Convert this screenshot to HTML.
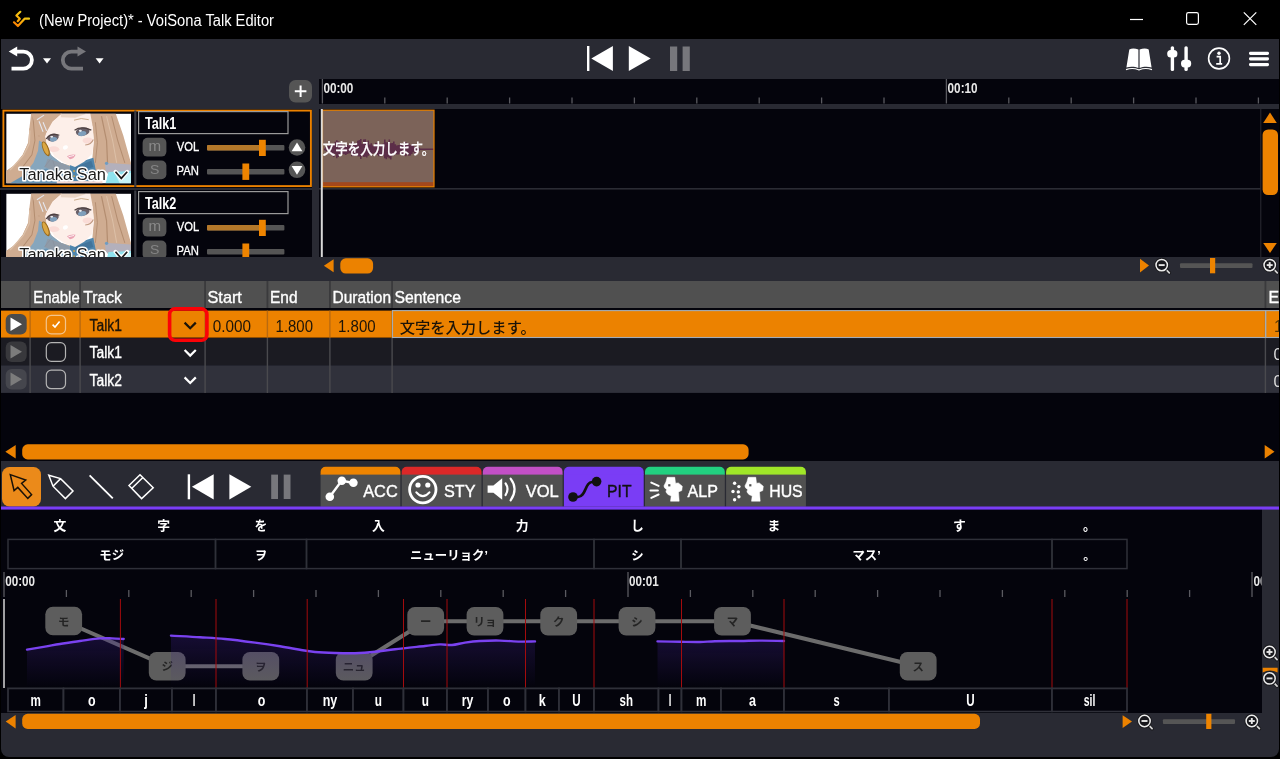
<!DOCTYPE html>
<html lang="ja"><head><meta charset="utf-8"><title>(New Project)* - VoiSona Talk Editor</title>
<style>
html,body{margin:0;padding:0;background:#000;}
body{width:1280px;height:759px;overflow:hidden;font-family:"Liberation Sans","Noto Sans CJK JP",sans-serif;}
#app{position:relative;width:1280px;height:759px;background:#000;overflow:hidden;}
#app>div{position:absolute;}
#win{left:1px;top:39px;width:1278px;height:718px;background:#292a33;border-radius:0 0 8px 8px;}
.dark{background:#04040c;}
svg{position:absolute;left:0;top:0;will-change:transform;}
svg text{font-family:"Liberation Sans","Noto Sans CJK JP",sans-serif;white-space:pre;}
</style></head><body>
<div id="app">
<div id="win"></div>
<div class="dark" id="ruler1" style="left:319px;top:78.5px;width:960px;height:25px"></div>
<div class="dark" id="trackhead" style="left:1px;top:109px;width:311px;height:148px"></div>
<div class="dark" id="tracklane" style="left:319px;top:109px;width:960px;height:148px"></div>
<div class="dark" id="tablearea" style="left:1px;top:308px;width:1278px;height:153px"></div>
<div class="dark" id="editor" style="left:1px;top:509px;width:1260.5px;height:203.5px"></div>
<svg width="1280" height="759" viewBox="0 0 1280 759">
<g id="titlebar">
<defs><linearGradient id="ig" gradientUnits="userSpaceOnUse" x1="26" y1="12" x2="15" y2="26"><stop offset="0" stop-color="#ecd81e"/><stop offset=".45" stop-color="#f7b80e"/><stop offset="1" stop-color="#ff7e00"/></linearGradient></defs>
<path d="M20.3 11.8 L16.4 15.5 L19.8 18.8 L17.7 21.2" fill="none" stroke="url(#ig)" stroke-width="2.2" stroke-linejoin="round" stroke-linecap="round"/>
<path d="M14 22.3 L17.9 26 L24.6 18.7 L29 18.7" fill="none" stroke="url(#ig)" stroke-width="2.2" stroke-linejoin="round" stroke-linecap="round"/>
<text x="39" y="25.7" font-size="16" fill="#fff" font-weight="400" text-anchor="start" textLength="235" lengthAdjust="spacingAndGlyphs" >(New Project)* - VoiSona Talk Editor</text>
<line x1="1130" y1="19.5" x2="1143" y2="19.5" stroke="#fff" stroke-width="1.2" />
<rect x="1186.6" y="12.6" width="11.8" height="11.8" rx="1.8" fill="none" stroke="#fff" stroke-width="1.2"/>
<path d="M1243.8 12.3 L1256.3 24.8 M1256.3 12.3 L1243.8 24.8" stroke="#fff" stroke-width="1.2" fill="none"/>
</g>
<g id="toolbar">
<path d="M16 51.6 H23.4 A8.4 8.4 0 0 1 23.4 68.6 H11.5" fill="none" stroke="#fff" stroke-width="3.8"/>
<polygon points="8.7,51.6 17.2,46.6 17.2,56.6" fill="#fff" />
<polygon points="43,58.3 51,58.3 47,63.6" fill="#fff" />
<path d="M78.5 51.6 H71.3 A8.4 8.4 0 0 0 71.3 68.6 H83" fill="none" stroke="#77777c" stroke-width="3.8"/>
<polygon points="86,51.6 77.5,46.6 77.5,56.6" fill="#77777c" />
<polygon points="95.6,58.3 103.6,58.3 99.6,63.6" fill="#fff" />
<rect x="587" y="46" width="2.4" height="25" fill="#fff"/>
<polygon points="591.3,58.5 612.9,46 612.9,71" fill="#fff" />
<polygon points="628.8,46 650.7,58.5 628.8,71" fill="#fff" />
<rect x="670" y="46.5" width="7.2" height="24.5" fill="#77777c"/>
<rect x="682.6" y="46.5" width="7.2" height="24.5" fill="#77777c"/>
<path d="M1138.4 49.6 C1135 48.2 1131.5 48.4 1129.3 49.4 L1126.4 67.6 C1130 66.4 1135 66.6 1138.4 68 Z" fill="#fff"/>
<path d="M1139.6 49.6 C1143 48.2 1146.5 48.4 1148.7 49.4 L1151.6 67.6 C1148 66.4 1143 66.6 1139.6 68 Z" fill="#fff"/>
<path d="M1126 69.6 C1130 68.2 1135 68.3 1138.6 69.8 L1139.4 69.8 C1143 68.3 1148 68.2 1152 69.6" fill="none" stroke="#fff" stroke-width="1.2"/>
<rect x="1170.7" y="46.2" width="3.4" height="24.8" fill="#fff" rx="1.6"/>
<rect x="1184.4" y="46.2" width="3.4" height="24.8" fill="#fff" rx="1.6"/>
<rect x="1167.2" y="50" width="10.2" height="7.6" fill="#fff" rx="3.6"/>
<rect x="1181" y="59.8" width="10.2" height="7.6" fill="#fff" rx="3.6"/>
<circle cx="1219" cy="58.5" r="10.4" fill="none" stroke="#fff" stroke-width="1.6"/>
<circle cx="1219" cy="53.3" r="1.7" fill="#fff"/>
<path d="M1216.6 56.6 H1220.2 V63.6 M1216.2 63.8 H1222.2" fill="none" stroke="#fff" stroke-width="1.7"/>
<rect x="1249" y="51.8" width="20" height="3.2" fill="#fff" rx="1.4"/>
<rect x="1249" y="57.3" width="20" height="3.2" fill="#fff" rx="1.4"/>
<rect x="1249" y="63.0" width="20" height="3.2" fill="#fff" rx="1.4"/>
</g>
<g id="ruler1g">
<line x1="322.4" y1="79" x2="322.4" y2="103.5" stroke="#5a5a60" stroke-width="1.3" />
<line x1="384.79999999999995" y1="97.5" x2="384.79999999999995" y2="103.5" stroke="#5a5a60" stroke-width="1.3" />
<line x1="447.2" y1="97.5" x2="447.2" y2="103.5" stroke="#5a5a60" stroke-width="1.3" />
<line x1="509.59999999999997" y1="97.5" x2="509.59999999999997" y2="103.5" stroke="#5a5a60" stroke-width="1.3" />
<line x1="572.0" y1="97.5" x2="572.0" y2="103.5" stroke="#5a5a60" stroke-width="1.3" />
<line x1="634.4" y1="97.5" x2="634.4" y2="103.5" stroke="#5a5a60" stroke-width="1.3" />
<line x1="696.8" y1="97.5" x2="696.8" y2="103.5" stroke="#5a5a60" stroke-width="1.3" />
<line x1="759.2" y1="97.5" x2="759.2" y2="103.5" stroke="#5a5a60" stroke-width="1.3" />
<line x1="821.5999999999999" y1="97.5" x2="821.5999999999999" y2="103.5" stroke="#5a5a60" stroke-width="1.3" />
<line x1="884.0" y1="97.5" x2="884.0" y2="103.5" stroke="#5a5a60" stroke-width="1.3" />
<line x1="946.4" y1="79" x2="946.4" y2="103.5" stroke="#5a5a60" stroke-width="1.3" />
<line x1="1008.8" y1="97.5" x2="1008.8" y2="103.5" stroke="#5a5a60" stroke-width="1.3" />
<line x1="1071.1999999999998" y1="97.5" x2="1071.1999999999998" y2="103.5" stroke="#5a5a60" stroke-width="1.3" />
<line x1="1133.6" y1="97.5" x2="1133.6" y2="103.5" stroke="#5a5a60" stroke-width="1.3" />
<line x1="1196.0" y1="97.5" x2="1196.0" y2="103.5" stroke="#5a5a60" stroke-width="1.3" />
<line x1="1258.4" y1="97.5" x2="1258.4" y2="103.5" stroke="#5a5a60" stroke-width="1.3" />
<text x="323.4" y="92.8" font-size="15" fill="#e8e8e8" font-weight="700" text-anchor="start" textLength="30" lengthAdjust="spacingAndGlyphs" >00:00</text>
<text x="947.6" y="92.8" font-size="15" fill="#e8e8e8" font-weight="700" text-anchor="start" textLength="30" lengthAdjust="spacingAndGlyphs" >00:10</text>
<rect x="289" y="80" width="23" height="22.5" fill="#555" rx="6.5"/>
<path d="M294.8 91.2 H306.4 M300.6 85.4 V97" stroke="#fff" stroke-width="2" fill="none"/>
</g>
<clipPath id="trk"><rect x="0" y="109" width="1280" height="148"/></clipPath>
<g id="tracks" clip-path="url(#trk)">
<rect x="3.4" y="110.6" width="307.5" height="75.5" fill="none" stroke="#ec8200" stroke-width="1.9"/>
<g transform="translate(6.2,113.6) scale(0.10156) translate(-22,-35)" clip-path="url(#pc1)">
<clipPath id="pc1"><rect x="22" y="35" width="1229" height="688"/></clipPath>
<rect x="22" y="35" width="1229" height="688" fill="#fff"/>
<path d="M268 35 L570 35 L470 120 L410 260 L420 340 L470 450 L560 520 L700 560 L700 722 L22 722 L22 600 L100 545 L185 440 L240 320 L250 180 Z" fill="#cfac91"/>
<path d="M345 300 L395 330 L470 450 L560 520 L660 555 L700 722 L120 722 L200 640 L290 520 L335 400 Z" fill="#86a6bd"/>
<path d="M60 722 L200 640 L420 575 L640 600 L700 722 Z" fill="#6a94b3"/>
<path d="M430 480 L560 520 L650 560 L640 610 L470 590 L400 560 Z" fill="#8f9ba8"/>
<path d="M22 600 L100 545 L185 440 L240 320 L250 180 L305 200 L330 330 L310 440 L230 560 L110 650 L22 690 Z" fill="#cfac91"/>
<path d="M285 60 L305 300 L275 440 L170 580" fill="none" stroke="#b38d70" stroke-width="10"/>
<path d="M330 60 L345 260" fill="none" stroke="#b38d70" stroke-width="8"/>
<path d="M255 200 L250 330 L190 450 L60 590" fill="none" stroke="#dcc0a8" stroke-width="12"/>
<path d="M800 35 L1100 35 L1175 250 L1250 520 L1250 600 L900 600 L870 480 L885 300 L870 160 Z" fill="#cfac91"/>
<path d="M960 60 L1010 300 L1020 520" fill="none" stroke="#b38d70" stroke-width="12"/>
<path d="M1060 60 L1120 300 L1190 520" fill="none" stroke="#b38d70" stroke-width="10"/>
<path d="M900 120 L920 320 L900 520" fill="none" stroke="#b38d70" stroke-width="9"/>
<path d="M1010 60 L1070 300 L1110 520" fill="none" stroke="#dcc0a8" stroke-width="10"/>
<path d="M650 540 L880 470 L905 600 L905 722 L650 722 Z" fill="#4f86ad"/>
<path d="M700 560 L860 500 L880 560 L720 610 Z" fill="#41749b"/>
<circle cx="690" cy="600" r="9" fill="#d9a64a"/><circle cx="690" cy="650" r="9" fill="#d9a64a"/>
<path d="M560 35 L850 35 L875 170 L885 300 L870 430 L790 510 L700 560 L600 525 L500 460 L440 370 L405 260 L440 150 Z" fill="#fdefe9"/>
<path d="M268 35 L570 35 L480 110 L430 200 L400 250 L330 250 L300 120 Z" fill="#cfac91"/>
<path d="M560 35 L820 35 L700 75 L560 70 Z" fill="#dcc0a8" opacity=".55"/>
<path d="M690 100 Q760 70 835 95" fill="none" stroke="#c8a782" stroke-width="9"/>
<path d="M325 95 L395 50 M345 110 L385 215 M385 120 L420 205" fill="none" stroke="#e4e6ee" stroke-width="11"/>
<ellipse cx="490" cy="385" rx="55" ry="28" fill="#f7c9c6" opacity=".5"/>
<ellipse cx="825" cy="300" rx="50" ry="30" fill="#f7c9c6" opacity=".5"/>
<path d="M800 345 Q860 340 880 290" fill="none" stroke="#c09a82" stroke-width="10"/>
<ellipse cx="482" cy="270" rx="58" ry="38" fill="#6a6068" transform="rotate(-12 482 270)"/>
<ellipse cx="488" cy="288" rx="36" ry="22" fill="#7f9fbb" transform="rotate(-12 488 288)"/>
<ellipse cx="470" cy="262" rx="14" ry="10" fill="#e8edf2"/>
<path d="M415 285 Q460 220 545 248" fill="none" stroke="#4e4040" stroke-width="11"/>
<ellipse cx="775" cy="212" rx="68" ry="42" fill="#6a6068" transform="rotate(-10 775 212)"/>
<ellipse cx="770" cy="232" rx="42" ry="24" fill="#7f9fbb" transform="rotate(-10 770 232)"/>
<ellipse cx="752" cy="205" rx="15" ry="10" fill="#e8edf2"/>
<path d="M695 198 Q760 155 860 198" fill="none" stroke="#4e4040" stroke-width="12"/>
<ellipse cx="605" cy="368" rx="26" ry="20" fill="#fff" transform="rotate(-25 605 368)"/>
<path d="M620 455 Q660 430 705 440 Q690 480 650 485 Z" fill="#eaa3b4"/>
<path d="M635 460 L690 447" stroke="#fff" stroke-width="8"/>
<ellipse cx="412" cy="382" rx="30" ry="78" fill="#9a6b1f" transform="rotate(-22 412 382)"/>
<ellipse cx="410" cy="380" rx="20" ry="66" fill="#dba844" transform="rotate(-22 410 380)"/>
<path d="M470 470 L400 560 M480 490 L500 560" stroke="#8a8f9c" stroke-width="6" fill="none"/>
<path d="M995 520 L1250 535 L1250 610 L1060 615 L1040 650 L1000 600 Z" fill="#b3b0bc"/>
<circle cx="1010" cy="525" r="16" fill="#6f9cc0"/>
<path d="M1030 610 L1250 600 L1250 722 L1000 722 Z" fill="#8fe2ee"/>
<path d="M1100 640 L1250 620 L1250 722 L1140 722 Z" fill="#c6f4f8"/>
<rect x="520" y="700" width="450" height="22" fill="#f6d9d2"/>
</g>
<text x="19.2" y="179.9" font-size="16.7" textLength="86.8" lengthAdjust="spacingAndGlyphs" fill="#1a1a1a" stroke="#fff" stroke-width="3" paint-order="stroke" stroke-linejoin="round">Tanaka San</text>
<path d="M115.5 171.8 L121.3 178.4 L127.2 171.8" fill="none" stroke="#fff" stroke-width="4" stroke-linejoin="round" stroke-linecap="round"/>
<path d="M115.5 171.8 L121.3 178.4 L127.2 171.8" fill="none" stroke="#1a1a1a" stroke-width="1.7"/>
<rect x="134.2" y="110.5" width="2.2" height="76.5" fill="#3a3b43"/>
<rect x="138.6" y="111.6" width="149.4" height="22" fill="none" stroke="#9a9a9a" stroke-width="1.2"/>
<text x="145" y="128.5" font-size="16.2" fill="#fff" font-weight="700" text-anchor="start" textLength="31.4" lengthAdjust="spacingAndGlyphs" >Talk1</text>
<rect x="142.6" y="137.8" width="23.8" height="18.8" fill="#555" rx="5"/>
<rect x="142.6" y="160.5" width="23.8" height="18.8" fill="#555" rx="5"/>
<text x="148.4" y="151.3" font-size="14.2" fill="#8a8a8a" font-weight="400" text-anchor="start" textLength="12.6" lengthAdjust="spacingAndGlyphs" >m</text>
<text x="150" y="174.4" font-size="12.5" fill="#858585" font-weight="400" text-anchor="start" textLength="9.4" lengthAdjust="spacingAndGlyphs" >S</text>
<text x="176.8" y="151.3" font-size="12.4" fill="#fff" font-weight="400" text-anchor="start" textLength="22.4" lengthAdjust="spacingAndGlyphs" stroke="#fff" stroke-width="0.3">VOL</text>
<text x="176.6" y="174.9" font-size="12.4" fill="#fff" font-weight="400" text-anchor="start" textLength="22.4" lengthAdjust="spacingAndGlyphs" stroke="#fff" stroke-width="0.3">PAN</text>
<rect x="207" y="145.1" width="77.4" height="5.4" fill="#555" rx="1"/>
<rect x="207" y="145.1" width="53" height="5.4" fill="#b4782a" rx="1"/>
<rect x="259" y="139.8" width="6.8" height="16.2" fill="#ee8400"/>
<rect x="207" y="169" width="77.4" height="5.4" fill="#555" rx="1"/>
<rect x="242.4" y="163.5" width="6.8" height="16.4" fill="#ee8400"/>
<g transform="translate(6.2,193.6) scale(0.10156) translate(-22,-35)" clip-path="url(#pc2)">
<clipPath id="pc2"><rect x="22" y="35" width="1229" height="688"/></clipPath>
<rect x="22" y="35" width="1229" height="688" fill="#fff"/>
<path d="M268 35 L570 35 L470 120 L410 260 L420 340 L470 450 L560 520 L700 560 L700 722 L22 722 L22 600 L100 545 L185 440 L240 320 L250 180 Z" fill="#cfac91"/>
<path d="M345 300 L395 330 L470 450 L560 520 L660 555 L700 722 L120 722 L200 640 L290 520 L335 400 Z" fill="#86a6bd"/>
<path d="M60 722 L200 640 L420 575 L640 600 L700 722 Z" fill="#6a94b3"/>
<path d="M430 480 L560 520 L650 560 L640 610 L470 590 L400 560 Z" fill="#8f9ba8"/>
<path d="M22 600 L100 545 L185 440 L240 320 L250 180 L305 200 L330 330 L310 440 L230 560 L110 650 L22 690 Z" fill="#cfac91"/>
<path d="M285 60 L305 300 L275 440 L170 580" fill="none" stroke="#b38d70" stroke-width="10"/>
<path d="M330 60 L345 260" fill="none" stroke="#b38d70" stroke-width="8"/>
<path d="M255 200 L250 330 L190 450 L60 590" fill="none" stroke="#dcc0a8" stroke-width="12"/>
<path d="M800 35 L1100 35 L1175 250 L1250 520 L1250 600 L900 600 L870 480 L885 300 L870 160 Z" fill="#cfac91"/>
<path d="M960 60 L1010 300 L1020 520" fill="none" stroke="#b38d70" stroke-width="12"/>
<path d="M1060 60 L1120 300 L1190 520" fill="none" stroke="#b38d70" stroke-width="10"/>
<path d="M900 120 L920 320 L900 520" fill="none" stroke="#b38d70" stroke-width="9"/>
<path d="M1010 60 L1070 300 L1110 520" fill="none" stroke="#dcc0a8" stroke-width="10"/>
<path d="M650 540 L880 470 L905 600 L905 722 L650 722 Z" fill="#4f86ad"/>
<path d="M700 560 L860 500 L880 560 L720 610 Z" fill="#41749b"/>
<circle cx="690" cy="600" r="9" fill="#d9a64a"/><circle cx="690" cy="650" r="9" fill="#d9a64a"/>
<path d="M560 35 L850 35 L875 170 L885 300 L870 430 L790 510 L700 560 L600 525 L500 460 L440 370 L405 260 L440 150 Z" fill="#fdefe9"/>
<path d="M268 35 L570 35 L480 110 L430 200 L400 250 L330 250 L300 120 Z" fill="#cfac91"/>
<path d="M560 35 L820 35 L700 75 L560 70 Z" fill="#dcc0a8" opacity=".55"/>
<path d="M690 100 Q760 70 835 95" fill="none" stroke="#c8a782" stroke-width="9"/>
<path d="M325 95 L395 50 M345 110 L385 215 M385 120 L420 205" fill="none" stroke="#e4e6ee" stroke-width="11"/>
<ellipse cx="490" cy="385" rx="55" ry="28" fill="#f7c9c6" opacity=".5"/>
<ellipse cx="825" cy="300" rx="50" ry="30" fill="#f7c9c6" opacity=".5"/>
<path d="M800 345 Q860 340 880 290" fill="none" stroke="#c09a82" stroke-width="10"/>
<ellipse cx="482" cy="270" rx="58" ry="38" fill="#6a6068" transform="rotate(-12 482 270)"/>
<ellipse cx="488" cy="288" rx="36" ry="22" fill="#7f9fbb" transform="rotate(-12 488 288)"/>
<ellipse cx="470" cy="262" rx="14" ry="10" fill="#e8edf2"/>
<path d="M415 285 Q460 220 545 248" fill="none" stroke="#4e4040" stroke-width="11"/>
<ellipse cx="775" cy="212" rx="68" ry="42" fill="#6a6068" transform="rotate(-10 775 212)"/>
<ellipse cx="770" cy="232" rx="42" ry="24" fill="#7f9fbb" transform="rotate(-10 770 232)"/>
<ellipse cx="752" cy="205" rx="15" ry="10" fill="#e8edf2"/>
<path d="M695 198 Q760 155 860 198" fill="none" stroke="#4e4040" stroke-width="12"/>
<ellipse cx="605" cy="368" rx="26" ry="20" fill="#fff" transform="rotate(-25 605 368)"/>
<path d="M620 455 Q660 430 705 440 Q690 480 650 485 Z" fill="#eaa3b4"/>
<path d="M635 460 L690 447" stroke="#fff" stroke-width="8"/>
<ellipse cx="412" cy="382" rx="30" ry="78" fill="#9a6b1f" transform="rotate(-22 412 382)"/>
<ellipse cx="410" cy="380" rx="20" ry="66" fill="#dba844" transform="rotate(-22 410 380)"/>
<path d="M470 470 L400 560 M480 490 L500 560" stroke="#8a8f9c" stroke-width="6" fill="none"/>
<path d="M995 520 L1250 535 L1250 610 L1060 615 L1040 650 L1000 600 Z" fill="#b3b0bc"/>
<circle cx="1010" cy="525" r="16" fill="#6f9cc0"/>
<path d="M1030 610 L1250 600 L1250 722 L1000 722 Z" fill="#8fe2ee"/>
<path d="M1100 640 L1250 620 L1250 722 L1140 722 Z" fill="#c6f4f8"/>
<rect x="520" y="700" width="450" height="22" fill="#f6d9d2"/>
</g>
<text x="19.2" y="259.9" font-size="16.7" textLength="86.8" lengthAdjust="spacingAndGlyphs" fill="#1a1a1a" stroke="#fff" stroke-width="3" paint-order="stroke" stroke-linejoin="round">Tanaka San</text>
<path d="M115.5 251.8 L121.3 258.4 L127.2 251.8" fill="none" stroke="#fff" stroke-width="4" stroke-linejoin="round" stroke-linecap="round"/>
<path d="M115.5 251.8 L121.3 258.4 L127.2 251.8" fill="none" stroke="#1a1a1a" stroke-width="1.7"/>
<rect x="134.2" y="190.5" width="2.2" height="76.5" fill="#3a3b43"/>
<rect x="138.6" y="191.6" width="149.4" height="22" fill="none" stroke="#9a9a9a" stroke-width="1.2"/>
<text x="145" y="208.5" font-size="16.2" fill="#fff" font-weight="700" text-anchor="start" textLength="31.4" lengthAdjust="spacingAndGlyphs" >Talk2</text>
<rect x="142.6" y="217.8" width="23.8" height="18.8" fill="#555" rx="5"/>
<rect x="142.6" y="240.5" width="23.8" height="18.8" fill="#555" rx="5"/>
<text x="148.4" y="231.3" font-size="14.2" fill="#8a8a8a" font-weight="400" text-anchor="start" textLength="12.6" lengthAdjust="spacingAndGlyphs" >m</text>
<text x="150" y="254.4" font-size="12.5" fill="#858585" font-weight="400" text-anchor="start" textLength="9.4" lengthAdjust="spacingAndGlyphs" >S</text>
<text x="176.8" y="231.3" font-size="12.4" fill="#fff" font-weight="400" text-anchor="start" textLength="22.4" lengthAdjust="spacingAndGlyphs" stroke="#fff" stroke-width="0.3">VOL</text>
<text x="176.6" y="254.9" font-size="12.4" fill="#fff" font-weight="400" text-anchor="start" textLength="22.4" lengthAdjust="spacingAndGlyphs" stroke="#fff" stroke-width="0.3">PAN</text>
<rect x="207" y="225.1" width="77.4" height="5.4" fill="#555" rx="1"/>
<rect x="207" y="225.1" width="53" height="5.4" fill="#b4782a" rx="1"/>
<rect x="259" y="219.8" width="6.8" height="16.2" fill="#ee8400"/>
<rect x="207" y="249" width="77.4" height="5.4" fill="#555" rx="1"/>
<rect x="242.4" y="243.5" width="6.8" height="16.4" fill="#ee8400"/>
<circle cx="297" cy="147.5" r="8.3" fill="#555"/>
<circle cx="297" cy="169.8" r="8.3" fill="#555"/>
<polygon points="297,142.5 302.4,151.3 291.6,151.3" fill="#fff" />
<polygon points="297,174.8 302.4,166 291.6,166" fill="#fff" />
<rect x="319" y="188" width="941.5" height="1.6" fill="#2b2c34"/>
<rect x="0" y="188" width="312" height="2" fill="#2b2c34"/>
<rect x="322.5" y="110.2" width="111.5" height="76.6" fill="#7c6359"/>
<rect x="322.5" y="182.2" width="111.5" height="4.6" fill="#a3481c"/>
<path d="M324.0 148.5h1.6v1.7h-1.6zM325.5 146.8h1.6v4.5h-1.6zM327.0 146.1h1.6v6.6h-1.6zM328.5 146.0h1.6v7.4h-1.6zM330.0 144.0h1.6v11.0h-1.6zM331.5 144.9h1.6v9.4h-1.6zM333.0 144.4h1.6v12.5h-1.6zM334.5 141.8h1.6v12.4h-1.6zM336.0 140.3h1.6v18.0h-1.6zM337.5 141.6h1.6v15.3h-1.6zM339.0 144.0h1.6v10.0h-1.6zM340.5 143.1h1.6v10.7h-1.6zM342.0 144.7h1.6v9.3h-1.6zM343.5 145.6h1.6v8.7h-1.6zM345.0 144.8h1.6v10.1h-1.6zM346.5 145.0h1.6v8.9h-1.6zM348.0 145.4h1.6v8.1h-1.6zM349.5 144.8h1.6v8.5h-1.6zM351.0 142.5h1.6v13.7h-1.6zM352.5 142.1h1.6v13.9h-1.6zM354.0 143.5h1.6v11.4h-1.6zM355.5 143.2h1.6v11.3h-1.6zM357.0 140.8h1.6v15.4h-1.6zM358.5 140.0h1.6v16.5h-1.6zM360.0 139.1h1.6v19.9h-1.6zM361.5 143.7h1.6v12.3h-1.6zM363.0 139.5h1.6v17.6h-1.6zM364.5 139.3h1.6v17.4h-1.6zM366.0 143.5h1.6v14.1h-1.6zM367.5 140.5h1.6v15.3h-1.6zM369.0 144.6h1.6v10.3h-1.6zM370.5 143.2h1.6v11.7h-1.6zM372.0 145.5h1.6v8.0h-1.6zM373.5 145.3h1.6v7.9h-1.6zM375.0 142.8h1.6v11.0h-1.6zM376.5 143.3h1.6v11.7h-1.6zM378.0 144.3h1.6v11.9h-1.6zM379.5 144.3h1.6v12.0h-1.6zM381.0 144.1h1.6v11.6h-1.6zM382.5 143.4h1.6v12.1h-1.6zM384.0 139.6h1.6v18.6h-1.6zM385.5 142.2h1.6v17.0h-1.6zM387.0 142.3h1.6v15.0h-1.6zM388.5 139.4h1.6v18.8h-1.6zM390.0 143.3h1.6v16.2h-1.6zM391.5 143.1h1.6v12.7h-1.6zM393.0 141.6h1.6v13.7h-1.6zM394.5 144.2h1.6v9.4h-1.6zM396.0 145.5h1.6v9.1h-1.6zM397.5 145.1h1.6v9.4h-1.6zM399.0 144.9h1.6v9.0h-1.6zM400.5 143.2h1.6v10.9h-1.6zM402.0 143.8h1.6v11.9h-1.6zM403.5 144.6h1.6v9.2h-1.6zM405.0 142.1h1.6v14.1h-1.6zM406.5 144.6h1.6v9.2h-1.6zM408.0 143.3h1.6v12.5h-1.6zM409.5 145.3h1.6v10.1h-1.6zM411.0 143.9h1.6v10.1h-1.6zM412.5 145.5h1.6v6.8h-1.6zM414.0 146.7h1.6v7.0h-1.6zM415.5 146.7h1.6v6.1h-1.6zM417.0 147.0h1.6v5.4h-1.6zM418.5 147.7h1.6v3.0h-1.6zM420.0 148.6h1.6v1.4h-1.6zM421.5 148.6h1.6v1.4h-1.6zM423.0 148.6h1.6v1.4h-1.6zM424.5 148.6h1.6v1.4h-1.6zM426.0 148.6h1.6v1.4h-1.6zM427.5 148.6h1.6v1.4h-1.6zM429.0 148.6h1.6v1.4h-1.6zM430.5 148.6h1.6v1.4h-1.6zM432.0 148.6h1.6v1.4h-1.6z" fill="#5c2e48"/>
<rect x="322.5" y="110.2" width="111.5" height="76.6" fill="none" stroke="#ec8200" stroke-width="1.2"/>
<text x="322.7" y="154.2" font-size="15" fill="#fff" font-weight="500" text-anchor="start" textLength="111.5" lengthAdjust="spacingAndGlyphs" stroke="#fff" stroke-width="0.25">文字を入力します。</text>
<rect x="320.8" y="109" width="2" height="148" fill="#d8d8d8"/>
<rect x="1260.3" y="109" width="1" height="148" fill="#2b2c34"/>
<polygon points="1270,112.5 1276.8,123 1263.2,123" fill="#ec8200" />
<rect x="1262.6" y="129.5" width="15.4" height="65.5" fill="#ec8200" rx="5.5"/>
<polygon points="1270,253 1276.8,243 1263.2,243" fill="#ec8200" />
</g>
<polygon points="323.9,265.7 333.6,259.2 333.6,272.3" fill="#ec8200" />
<rect x="340.3" y="258.3" width="32.8" height="15.3" fill="#ec8200" rx="5.5"/>
<polygon points="1149,265.6 1140,258.8 1140,272.5" fill="#ec8200" />
<path d="M1165.9 269.3 L1169.3 272.8" stroke="#1a1a1e" stroke-width="3.6" stroke-linecap="round"/>
<path d="M1165.9 269.3 L1169.3 272.8" stroke="#d4d4d4" stroke-width="1.7" stroke-linecap="round"/>
<circle cx="1161.7" cy="265.1" r="5.7" fill="#17171c" stroke="#1a1a1e" stroke-width="3.4"/>
<circle cx="1161.7" cy="265.1" r="5.7" fill="none" stroke="#ededed" stroke-width="1.5"/>
<path d="M1158.7 265.1 H1164.7" stroke="#e6e6e6" stroke-width="1.9"/>
<rect x="1180" y="263.3" width="72.5" height="4.8" fill="#555" rx="1"/>
<rect x="1210" y="258" width="5.2" height="15.3" fill="#ee8400"/>
<path d="M1273.9 269.3 L1277.3 272.8" stroke="#1a1a1e" stroke-width="3.6" stroke-linecap="round"/>
<path d="M1273.9 269.3 L1277.3 272.8" stroke="#d4d4d4" stroke-width="1.7" stroke-linecap="round"/>
<circle cx="1269.7" cy="265.1" r="5.7" fill="#17171c" stroke="#1a1a1e" stroke-width="3.4"/>
<circle cx="1269.7" cy="265.1" r="5.7" fill="none" stroke="#ededed" stroke-width="1.5"/>
<path d="M1266.7 265.1 H1272.7" stroke="#e6e6e6" stroke-width="1.9"/>
<path d="M1269.7 262.1 V268.1" stroke="#e6e6e6" stroke-width="1.9"/>
<clipPath id="tbc"><rect x="1" y="275" width="1278" height="190"/></clipPath>
<g id="table" clip-path="url(#tbc)">
<rect x="1" y="281" width="1278" height="27" fill="#505050"/>
<rect x="29.2" y="281" width="1.8" height="27" fill="#3a3a3c"/>
<rect x="79.2" y="281" width="1.8" height="27" fill="#3a3a3c"/>
<rect x="204.2" y="281" width="1.8" height="27" fill="#3a3a3c"/>
<rect x="266.5" y="281" width="1.8" height="27" fill="#3a3a3c"/>
<rect x="329.0" y="281" width="1.8" height="27" fill="#3a3a3c"/>
<rect x="391.2" y="281" width="1.8" height="27" fill="#3a3a3c"/>
<rect x="1264.5" y="281" width="1.8" height="27" fill="#3a3a3c"/>
<text x="33.3" y="302.5" font-size="16.6" fill="#fff" font-weight="400" text-anchor="start" textLength="46.4" lengthAdjust="spacingAndGlyphs" stroke="#fff" stroke-width="0.35">Enable</text>
<text x="83.3" y="302.5" font-size="16.6" fill="#fff" font-weight="400" text-anchor="start" textLength="38.6" lengthAdjust="spacingAndGlyphs" stroke="#fff" stroke-width="0.35">Track</text>
<text x="207.5" y="302.5" font-size="16.6" fill="#fff" font-weight="400" text-anchor="start" textLength="34.4" lengthAdjust="spacingAndGlyphs" stroke="#fff" stroke-width="0.35">Start</text>
<text x="270" y="302.5" font-size="16.6" fill="#fff" font-weight="400" text-anchor="start" textLength="27.5" lengthAdjust="spacingAndGlyphs" stroke="#fff" stroke-width="0.35">End</text>
<text x="332.5" y="302.5" font-size="16.6" fill="#fff" font-weight="400" text-anchor="start" textLength="58.5" lengthAdjust="spacingAndGlyphs" stroke="#fff" stroke-width="0.35">Duration</text>
<text x="394.4" y="302.5" font-size="16.6" fill="#fff" font-weight="400" text-anchor="start" textLength="66.6" lengthAdjust="spacingAndGlyphs" stroke="#fff" stroke-width="0.35">Sentence</text>
<text x="1268.6" y="302.5" font-size="16.6" fill="#fff" font-weight="400" text-anchor="start" textLength="46" lengthAdjust="spacingAndGlyphs" stroke="#fff" stroke-width="0.35">Export</text>
<rect x="1" y="310.6" width="1278" height="27" fill="#ec8200"/>
<rect x="1" y="338" width="1278" height="27.3" fill="#1b1b22"/>
<rect x="1" y="365.3" width="1278" height="27.6" fill="#30313b"/>
<rect x="29.4" y="338" width="1.4" height="55" fill="#4a4a4e"/>
<rect x="29.4" y="310.6" width="1.4" height="27" fill="#b86a10"/>
<rect x="79.4" y="338" width="1.4" height="55" fill="#4a4a4e"/>
<rect x="79.4" y="310.6" width="1.4" height="27" fill="#b86a10"/>
<rect x="204.4" y="338" width="1.4" height="55" fill="#4a4a4e"/>
<rect x="204.4" y="310.6" width="1.4" height="27" fill="#b86a10"/>
<rect x="266.7" y="338" width="1.4" height="55" fill="#4a4a4e"/>
<rect x="266.7" y="310.6" width="1.4" height="27" fill="#b86a10"/>
<rect x="329.2" y="338" width="1.4" height="55" fill="#4a4a4e"/>
<rect x="329.2" y="310.6" width="1.4" height="27" fill="#b86a10"/>
<rect x="391.4" y="338" width="1.4" height="55" fill="#4a4a4e"/>
<rect x="391.4" y="310.6" width="1.4" height="27" fill="#b86a10"/>
<rect x="1264.7" y="338" width="1.4" height="55" fill="#4a4a4e"/>
<rect x="1264.7" y="310.6" width="1.4" height="27" fill="#b86a10"/>
<rect x="392.5" y="310.6" width="873" height="26.9" fill="none" stroke="#a4acb4" stroke-width="1.1"/>
<rect x="1265.8" y="310.6" width="14" height="26.9" fill="none" stroke="#a4acb4" stroke-width="1.1"/>
<rect x="5.7" y="314" width="21" height="20.5" fill="#4b4b4b" rx="6"/>
<polygon points="10.5,317.6 22,324.3 10.5,331" fill="#fff" />
<rect x="5.7" y="341.5" width="21" height="20.5" fill="#38383c" rx="6"/>
<polygon points="10.5,345.1 22,351.8 10.5,358.5" fill="#7c7c7c" />
<rect x="5.7" y="369" width="21" height="20.5" fill="#45464d" rx="6"/>
<polygon points="10.5,372.6 22,379.3 10.5,386" fill="#7c7c7c" />
<rect x="46.3" y="315.3" width="19.2" height="18.6" rx="5" fill="none" stroke="#f3c48c" stroke-width="1.2"/>
<rect x="46.3" y="342.7" width="19.2" height="18.6" rx="5" fill="none" stroke="#b4b4b4" stroke-width="1.2"/>
<rect x="46.3" y="370.1" width="19.2" height="18.6" rx="5" fill="none" stroke="#b4b4b4" stroke-width="1.2"/>
<path d="M52.6 324.6 L55 327 L59.6 321.6" fill="none" stroke="#fff" stroke-width="1.6"/>
<text x="89.6" y="330.7" font-size="15.8" fill="#1c1408" font-weight="400" text-anchor="start" textLength="32.4" lengthAdjust="spacingAndGlyphs" stroke="#1c1408" stroke-width="0.35">Talk1</text>
<text x="89.6" y="358.1" font-size="15.8" fill="#fff" font-weight="400" text-anchor="start" textLength="32.4" lengthAdjust="spacingAndGlyphs" stroke="#fff" stroke-width="0.35">Talk1</text>
<text x="89.6" y="385.5" font-size="15.8" fill="#fff" font-weight="400" text-anchor="start" textLength="32.4" lengthAdjust="spacingAndGlyphs" stroke="#fff" stroke-width="0.35">Talk2</text>
<path d="M184.6 322.6 L190.2 328.2 L195.8 322.6" fill="none" stroke="#1c1408" stroke-width="2.2"/>
<path d="M184.6 350.0 L190.2 355.59999999999997 L195.8 350.0" fill="none" stroke="#fff" stroke-width="2.2"/>
<path d="M184.6 377.40000000000003 L190.2 383.0 L195.8 377.40000000000003" fill="none" stroke="#fff" stroke-width="2.2"/>
<text x="212.8" y="332.2" font-size="16" fill="#1c1408" font-weight="400" text-anchor="start" textLength="38.2" lengthAdjust="spacingAndGlyphs" >0.000</text>
<text x="275.6" y="332.2" font-size="16" fill="#1c1408" font-weight="400" text-anchor="start" textLength="37.4" lengthAdjust="spacingAndGlyphs" >1.800</text>
<text x="338" y="332.2" font-size="16" fill="#1c1408" font-weight="400" text-anchor="start" textLength="37.6" lengthAdjust="spacingAndGlyphs" >1.800</text>
<text x="399.7" y="332.8" font-size="15" fill="#1c1408" font-weight="500" text-anchor="start" textLength="136" lengthAdjust="spacingAndGlyphs" >文字を入力します。</text>
<text x="1274" y="332.2" font-size="16" fill="#5a3a08" font-weight="400" text-anchor="start" >1.00</text>
<text x="1273.6" y="359.6" font-size="16" fill="#ddd" font-weight="400" text-anchor="start" >0.00</text>
<text x="1273.6" y="387" font-size="16" fill="#ddd" font-weight="400" text-anchor="start" >0.00</text>
<rect x="169.6" y="308.9" width="37.3" height="31.4" rx="5.5" fill="none" stroke="#fb0207" stroke-width="3.6"/>
<polygon points="5.3,451.7 15.7,445 15.7,458.4" fill="#ec8200" />
<rect x="22.2" y="444.3" width="726.4" height="15.1" fill="#ec8200" rx="5.5"/>
<polygon points="1274.5,451.7 1264.7,445 1264.7,458.4" fill="#ec8200" />
</g>
<g id="edtoolbar">
<rect x="2" y="467" width="39" height="39.5" fill="#eb8a1a" rx="7.5"/>
<path d="M10.3 474.6 L25.7 480.1 L21.6 483.4 L31.6 494.6 L27.8 498.4 L17.8 487.4 L14.1 490.6 Z" fill="none" stroke="#1a1208" stroke-width="1.5" stroke-linejoin="miter"/>
<path d="M48.8 475.2 L60.6 478.6 L73 491 L65.4 498.6 L53 486.2 Z M53 486.2 L60.6 478.6" fill="none" stroke="#fff" stroke-width="1.5" stroke-linejoin="miter"/>
<path d="M89.6 475.4 L112.8 498.4" stroke="#fff" stroke-width="1.8" fill="none"/>
<path d="M140 474.8 L153.2 487.8 L141.6 498.6 L129 485.4 Z M131.9 488.3 L142.9 477.5" fill="none" stroke="#fff" stroke-width="1.5" stroke-linejoin="miter"/>
<rect x="187.7" y="474.3" width="2.4" height="25" fill="#fff"/>
<polygon points="191.9,486.8 213.7,474.2 213.7,499.4" fill="#fff" />
<polygon points="229.4,474.2 251.3,486.8 229.4,499.4" fill="#fff" />
<rect x="271.2" y="474.6" width="6.8" height="24.4" fill="#77777c"/>
<rect x="283.7" y="474.6" width="6.8" height="24.4" fill="#77777c"/>
<path d="M320.6 475 V471.8 A5 5 0 0 1 325.6 466.8 H395.4 A5 5 0 0 1 400.4 471.8 V475 Z" fill="#ee8400"/>
<rect x="320.6" y="474.6" width="79.8" height="32" fill="#505050"/>
<path d="M401.7 475 V471.8 A5 5 0 0 1 406.7 466.8 H476.5 A5 5 0 0 1 481.5 471.8 V475 Z" fill="#dc2828"/>
<rect x="401.7" y="474.6" width="79.8" height="32" fill="#505050"/>
<path d="M482.8 475 V471.8 A5 5 0 0 1 487.8 466.8 H557.6 A5 5 0 0 1 562.6 471.8 V475 Z" fill="#c24fc6"/>
<rect x="482.8" y="474.6" width="79.8" height="32" fill="#505050"/>
<path d="M563.9 475 V471.8 A5 5 0 0 1 568.9 466.8 H638.7 A5 5 0 0 1 643.7 471.8 V475 Z" fill="#7a3df5"/>
<rect x="563.9" y="474.6" width="79.8" height="32" fill="#7a3df5"/>
<path d="M645.0 475 V471.8 A5 5 0 0 1 650.0 466.8 H719.8 A5 5 0 0 1 724.8 471.8 V475 Z" fill="#22d080"/>
<rect x="645.0" y="474.6" width="79.8" height="32" fill="#505050"/>
<path d="M726.1 475 V471.8 A5 5 0 0 1 731.1 466.8 H800.9 A5 5 0 0 1 805.9 471.8 V475 Z" fill="#a0e628"/>
<rect x="726.1" y="474.6" width="79.8" height="32" fill="#505050"/>
<text x="363.2" y="497.3" font-size="17.3" fill="#fff" font-weight="400" text-anchor="start" textLength="34.5" lengthAdjust="spacingAndGlyphs" stroke="#fff" stroke-width="0.4">ACC</text>
<text x="444" y="497.3" font-size="17.3" fill="#fff" font-weight="400" text-anchor="start" textLength="31.5" lengthAdjust="spacingAndGlyphs" stroke="#fff" stroke-width="0.4">STY</text>
<text x="525.7" y="497.3" font-size="17.3" fill="#fff" font-weight="400" text-anchor="start" textLength="33.1" lengthAdjust="spacingAndGlyphs" stroke="#fff" stroke-width="0.4">VOL</text>
<text x="607" y="497.3" font-size="17.3" fill="#111" font-weight="400" text-anchor="start" textLength="24.5" lengthAdjust="spacingAndGlyphs" stroke="#111" stroke-width="0.4">PIT</text>
<text x="687.6" y="497.3" font-size="17.3" fill="#fff" font-weight="400" text-anchor="start" textLength="30.4" lengthAdjust="spacingAndGlyphs" stroke="#fff" stroke-width="0.4">ALP</text>
<text x="769.2" y="497.3" font-size="17.3" fill="#fff" font-weight="400" text-anchor="start" textLength="33.5" lengthAdjust="spacingAndGlyphs" stroke="#fff" stroke-width="0.4">HUS</text>
<path d="M329.8 496.8 L341.8 480.6 L353 483" stroke="#fff" stroke-width="2.4" fill="none"/>
<circle cx="329.8" cy="496.8" r="4.3" fill="#fff"/>
<circle cx="341.8" cy="480.8" r="4.3" fill="#fff"/>
<circle cx="353.4" cy="482.8" r="4.3" fill="#fff"/>
<circle cx="422.8" cy="489.6" r="13.2" fill="none" stroke="#fff" stroke-width="2.8"/>
<circle cx="418" cy="485" r="2.6" fill="#fff"/><circle cx="427.8" cy="485" r="2.6" fill="#fff"/>
<path d="M416.4 492.4 Q422.8 500 429.4 492.4" fill="none" stroke="#fff" stroke-width="2.2" stroke-linecap="round"/>
<path d="M487.6 485.6 H493.4 L502.2 478.2 V499.8 L493.4 492.8 H487.6 Z" fill="#fff"/>
<path d="M505.6 483.4 Q509.4 489 505.6 495" fill="none" stroke="#fff" stroke-width="2.2" stroke-linecap="round"/>
<path d="M510.6 478.6 Q518.6 489 510.6 500.4" fill="none" stroke="#fff" stroke-width="2.2" stroke-linecap="round"/>
<path d="M573 497 H578 C586 497 585 482 592 482 H596" stroke="#111" stroke-width="2.6" fill="none"/>
<circle cx="573" cy="497" r="4.8" fill="#111"/><circle cx="596.6" cy="481.6" r="4.8" fill="#111"/>
<polygon points="667.2,477.3 674.8,477.3 675.5,483.2 678.3,482.9 682.3,486.2 681.8,490.6 678.5,491.9 679.2,501.2 670.5,501.2 671.2,495.9 667.9,494.5 665.9,491.9 666.6,489.4 664.6,487.9 663.9,485.9 665.9,481.9" fill="#fff" stroke="#fff" stroke-width="0.5" stroke-linejoin="round"/>
<rect x="668.2" y="484.2" width="2.2" height="2.2" fill="#505050"/>
<path d="M651.3 482.6 L658.6 485.9 M650.4 490.6 H657.9 M651.3 497.9 L658.6 494.5" stroke="#fff" stroke-width="2" fill="none" stroke-linecap="round"/>
<polygon points="748.2,477.3 755.8,477.3 756.5,483.2 759.3,482.9 763.3,486.2 762.8,490.6 759.5,491.9 760.2,501.2 751.5,501.2 752.2,495.9 748.9,494.5 746.9,491.9 747.6,489.4 745.6,487.9 744.9,485.9 746.9,481.9" fill="#fff" stroke="#fff" stroke-width="0.5" stroke-linejoin="round"/>
<rect x="749.2" y="484.2" width="2.2" height="2.2" fill="#505050"/>
<circle cx="734.6" cy="483.2" r="1.7" fill="#fff"/>
<circle cx="738.9" cy="486.6" r="1.7" fill="#fff"/>
<circle cx="733" cy="491.5" r="1.7" fill="#fff"/>
<circle cx="738.3" cy="491.9" r="1.7" fill="#fff"/>
<circle cx="738.9" cy="496.8" r="1.7" fill="#fff"/>
<circle cx="734.6" cy="499.8" r="1.7" fill="#fff"/>
<rect x="1" y="506.5" width="1278" height="3.1" fill="#7a3df5"/>
</g>
<clipPath id="edc"><rect x="1" y="509.6" width="1260.5" height="203"/></clipPath>
<g id="editorg" clip-path="url(#edc)">
<text x="59.9" y="529.6" font-size="12.8" fill="#fff" font-weight="700" text-anchor="middle" >文</text>
<text x="163.6" y="529.6" font-size="12.8" fill="#fff" font-weight="700" text-anchor="middle" >字</text>
<text x="261" y="529.6" font-size="12.8" fill="#fff" font-weight="700" text-anchor="middle" >を</text>
<text x="378.4" y="529.6" font-size="12.8" fill="#fff" font-weight="700" text-anchor="middle" >入</text>
<text x="522.1" y="529.6" font-size="12.8" fill="#fff" font-weight="700" text-anchor="middle" >力</text>
<text x="637.5" y="529.6" font-size="12.8" fill="#fff" font-weight="700" text-anchor="middle" >し</text>
<text x="773.8" y="529.6" font-size="12.8" fill="#fff" font-weight="700" text-anchor="middle" >ま</text>
<text x="959.3" y="529.6" font-size="12.8" fill="#fff" font-weight="700" text-anchor="middle" >す</text>
<text x="1089.5" y="529.6" font-size="12.8" fill="#fff" font-weight="700" text-anchor="middle" >。</text>
<rect x="8" y="539.4" width="207.5" height="29.2" fill="none" stroke="#2f3039" stroke-width="1.5"/>
<rect x="215.5" y="539.4" width="91.0" height="29.2" fill="none" stroke="#2f3039" stroke-width="1.5"/>
<rect x="306.5" y="539.4" width="287.5" height="29.2" fill="none" stroke="#2f3039" stroke-width="1.5"/>
<rect x="594" y="539.4" width="87" height="29.2" fill="none" stroke="#2f3039" stroke-width="1.5"/>
<rect x="681" y="539.4" width="371" height="29.2" fill="none" stroke="#2f3039" stroke-width="1.5"/>
<rect x="1052" y="539.4" width="75" height="29.2" fill="none" stroke="#2f3039" stroke-width="1.5"/>
<text x="111.75" y="560.2" font-size="12.4" fill="#fff" font-weight="700" text-anchor="middle" >モジ</text>
<text x="261" y="560.2" font-size="12.4" fill="#fff" font-weight="700" text-anchor="middle" >ヲ</text>
<text x="449" y="560.2" font-size="12.4" fill="#fff" font-weight="700" text-anchor="middle" >ニューリョク’</text>
<text x="637.5" y="560.2" font-size="12.4" fill="#fff" font-weight="700" text-anchor="middle" >シ</text>
<text x="866.5" y="560.2" font-size="12.4" fill="#fff" font-weight="700" text-anchor="middle" >マス’</text>
<text x="1089.5" y="560.2" font-size="12.4" fill="#fff" font-weight="700" text-anchor="middle" >。</text>
<line x1="4.0" y1="572" x2="4.0" y2="597" stroke="#5a5a60" stroke-width="1.3" />
<line x1="66.4" y1="590" x2="66.4" y2="597" stroke="#5a5a60" stroke-width="1.3" />
<line x1="128.8" y1="590" x2="128.8" y2="597" stroke="#5a5a60" stroke-width="1.3" />
<line x1="191.2" y1="590" x2="191.2" y2="597" stroke="#5a5a60" stroke-width="1.3" />
<line x1="253.6" y1="590" x2="253.6" y2="597" stroke="#5a5a60" stroke-width="1.3" />
<line x1="316.0" y1="590" x2="316.0" y2="597" stroke="#5a5a60" stroke-width="1.3" />
<line x1="378.4" y1="590" x2="378.4" y2="597" stroke="#5a5a60" stroke-width="1.3" />
<line x1="440.8" y1="590" x2="440.8" y2="597" stroke="#5a5a60" stroke-width="1.3" />
<line x1="503.2" y1="590" x2="503.2" y2="597" stroke="#5a5a60" stroke-width="1.3" />
<line x1="565.6" y1="590" x2="565.6" y2="597" stroke="#5a5a60" stroke-width="1.3" />
<line x1="628.0" y1="572" x2="628.0" y2="597" stroke="#5a5a60" stroke-width="1.3" />
<line x1="690.4" y1="590" x2="690.4" y2="597" stroke="#5a5a60" stroke-width="1.3" />
<line x1="752.8" y1="590" x2="752.8" y2="597" stroke="#5a5a60" stroke-width="1.3" />
<line x1="815.1999999999999" y1="590" x2="815.1999999999999" y2="597" stroke="#5a5a60" stroke-width="1.3" />
<line x1="877.6" y1="590" x2="877.6" y2="597" stroke="#5a5a60" stroke-width="1.3" />
<line x1="940.0" y1="590" x2="940.0" y2="597" stroke="#5a5a60" stroke-width="1.3" />
<line x1="1002.4" y1="590" x2="1002.4" y2="597" stroke="#5a5a60" stroke-width="1.3" />
<line x1="1064.8" y1="590" x2="1064.8" y2="597" stroke="#5a5a60" stroke-width="1.3" />
<line x1="1127.2" y1="590" x2="1127.2" y2="597" stroke="#5a5a60" stroke-width="1.3" />
<line x1="1189.6" y1="590" x2="1189.6" y2="597" stroke="#5a5a60" stroke-width="1.3" />
<line x1="1252.0" y1="572" x2="1252.0" y2="597" stroke="#5a5a60" stroke-width="1.3" />
<text x="5.2" y="585.6" font-size="15" fill="#e8e8e8" font-weight="700" text-anchor="start" textLength="29.8" lengthAdjust="spacingAndGlyphs" >00:00</text>
<text x="629" y="585.6" font-size="15" fill="#e8e8e8" font-weight="700" text-anchor="start" textLength="29.8" lengthAdjust="spacingAndGlyphs" >00:01</text>
<text x="1253.6" y="585.6" font-size="15" fill="#e8e8e8" font-weight="700" text-anchor="start" textLength="29.8" lengthAdjust="spacingAndGlyphs" >00:02</text>
<path d="M63.7 621 L167.2 666.2 L260.8 666.2" fill="none" stroke="#6c6c6c" stroke-width="4" stroke-linejoin="round"/>
<path d="M354.2 666.2 L425.7 621.2 L485 621.2 L558.7 621.2 L637 621.2 L732.5 621.2 L918.2 666.2" fill="none" stroke="#6c6c6c" stroke-width="4" stroke-linejoin="round"/>
<rect x="45.300000000000004" y="606.8" width="36.8" height="28.4" rx="7.5" fill="#5d5d5d"/>
<text x="63.7" y="626.2" font-size="11.4" fill="#242424" font-weight="700" text-anchor="middle" >モ</text>
<rect x="148.79999999999998" y="652.0" width="36.8" height="28.4" rx="7.5" fill="#5d5d5d"/>
<text x="167.2" y="671.4000000000001" font-size="11.4" fill="#242424" font-weight="700" text-anchor="middle" >ジ</text>
<rect x="242.4" y="652.0" width="36.8" height="28.4" rx="7.5" fill="#5d5d5d"/>
<text x="260.8" y="671.4000000000001" font-size="11.4" fill="#242424" font-weight="700" text-anchor="middle" >ヲ</text>
<rect x="335.8" y="652.0" width="36.8" height="28.4" rx="7.5" fill="#5d5d5d"/>
<text x="354.2" y="671.4000000000001" font-size="11.4" fill="#242424" font-weight="700" text-anchor="middle" >ニュ</text>
<rect x="407.3" y="607.0" width="36.8" height="28.4" rx="7.5" fill="#5d5d5d"/>
<text x="425.7" y="626.4000000000001" font-size="11.4" fill="#242424" font-weight="700" text-anchor="middle" >ー</text>
<rect x="466.6" y="607.0" width="36.8" height="28.4" rx="7.5" fill="#5d5d5d"/>
<text x="485" y="626.4000000000001" font-size="11.4" fill="#242424" font-weight="700" text-anchor="middle" >リョ</text>
<rect x="540.3000000000001" y="607.0" width="36.8" height="28.4" rx="7.5" fill="#5d5d5d"/>
<text x="558.7" y="626.4000000000001" font-size="11.4" fill="#242424" font-weight="700" text-anchor="middle" >ク</text>
<rect x="618.6" y="607.0" width="36.8" height="28.4" rx="7.5" fill="#5d5d5d"/>
<text x="637" y="626.4000000000001" font-size="11.4" fill="#242424" font-weight="700" text-anchor="middle" >シ</text>
<rect x="714.1" y="607.0" width="36.8" height="28.4" rx="7.5" fill="#5d5d5d"/>
<text x="732.5" y="626.4000000000001" font-size="11.4" fill="#242424" font-weight="700" text-anchor="middle" >マ</text>
<rect x="899.8000000000001" y="652.0" width="36.8" height="28.4" rx="7.5" fill="#5d5d5d"/>
<text x="918.2" y="671.4000000000001" font-size="11.4" fill="#242424" font-weight="700" text-anchor="middle" >ス</text>
<defs><linearGradient id="pg" x1="0" y1="0" x2="0" y2="1"><stop offset="0" stop-color="#3a2080" stop-opacity=".34"/><stop offset="1" stop-color="#3a2080" stop-opacity="0"/></linearGradient></defs>
<path d="M27 649.6 C30.0 649.1 39.5 647.5 45 646.6 C50.5 645.7 54.2 644.9 60 644 C65.8 643.1 73.3 641.9 80 641 C86.7 640.1 94.7 638.8 100 638.4 C105.3 638.0 108.0 638.3 112 638.4 C116.0 638.5 121.8 638.9 123.7 639 L123.7 688 L27 688 Z" fill="url(#pg)"/>
<path d="M27 649.6 C30.0 649.1 39.5 647.5 45 646.6 C50.5 645.7 54.2 644.9 60 644 C65.8 643.1 73.3 641.9 80 641 C86.7 640.1 94.7 638.8 100 638.4 C105.3 638.0 108.0 638.3 112 638.4 C116.0 638.5 121.8 638.9 123.7 639" fill="none" stroke="#7a42f0" stroke-width="2.4" stroke-linejoin="round" stroke-linecap="round"/>
<path d="M171 635.6 C175.8 635.9 191.0 636.6 200 637.2 C209.0 637.8 215.8 638.1 225 639 C234.2 639.9 245.8 641.4 255 642.6 C264.2 643.8 272.5 645.0 280 646.2 C287.5 647.4 294.2 648.8 300 649.8 C305.8 650.8 309.2 651.5 315 652 C320.8 652.5 328.3 652.8 335 653 C341.7 653.2 348.3 653.4 355 653.2 C361.7 653.0 368.3 652.5 375 651.8 C381.7 651.1 386.7 650.2 395 649.2 C403.3 648.2 417.5 646.8 425 646 C432.5 645.2 435.5 644.6 440 644.4 C444.5 644.2 447.8 645.3 452 645 C456.2 644.7 460.3 643.3 465 642.6 C469.7 641.9 474.2 641.3 480 641 C485.8 640.7 493.3 640.5 500 640.6 C506.7 640.7 514.2 641.5 520 641.6 C525.8 641.7 532.5 641.4 535 641.4 L535 688 L171 688 Z" fill="url(#pg)"/>
<path d="M171 635.6 C175.8 635.9 191.0 636.6 200 637.2 C209.0 637.8 215.8 638.1 225 639 C234.2 639.9 245.8 641.4 255 642.6 C264.2 643.8 272.5 645.0 280 646.2 C287.5 647.4 294.2 648.8 300 649.8 C305.8 650.8 309.2 651.5 315 652 C320.8 652.5 328.3 652.8 335 653 C341.7 653.2 348.3 653.4 355 653.2 C361.7 653.0 368.3 652.5 375 651.8 C381.7 651.1 386.7 650.2 395 649.2 C403.3 648.2 417.5 646.8 425 646 C432.5 645.2 435.5 644.6 440 644.4 C444.5 644.2 447.8 645.3 452 645 C456.2 644.7 460.3 643.3 465 642.6 C469.7 641.9 474.2 641.3 480 641 C485.8 640.7 493.3 640.5 500 640.6 C506.7 640.7 514.2 641.5 520 641.6 C525.8 641.7 532.5 641.4 535 641.4" fill="none" stroke="#7a42f0" stroke-width="2.4" stroke-linejoin="round" stroke-linecap="round"/>
<path d="M657.5 641.4 C661.2 641.5 672.9 641.7 680 641.8 C687.1 641.9 694.2 642.1 700 642 C705.8 641.9 708.3 641.4 715 641.2 C721.7 641.0 732.5 641.1 740 641 C747.5 640.9 752.7 640.6 760 640.6 C767.3 640.6 780.0 640.9 784 641 L784 688 L657.5 688 Z" fill="url(#pg)"/>
<path d="M657.5 641.4 C661.2 641.5 672.9 641.7 680 641.8 C687.1 641.9 694.2 642.1 700 642 C705.8 641.9 708.3 641.4 715 641.2 C721.7 641.0 732.5 641.1 740 641 C747.5 640.9 752.7 640.6 760 640.6 C767.3 640.6 780.0 640.9 784 641" fill="none" stroke="#7a42f0" stroke-width="2.4" stroke-linejoin="round" stroke-linecap="round"/>
<line x1="120.4" y1="599" x2="120.4" y2="688" stroke="#a30b0d" stroke-width="1" />
<line x1="216" y1="599" x2="216" y2="688" stroke="#a30b0d" stroke-width="1" />
<line x1="307.2" y1="599" x2="307.2" y2="688" stroke="#a30b0d" stroke-width="1" />
<line x1="403.5" y1="599" x2="403.5" y2="688" stroke="#a30b0d" stroke-width="1" />
<line x1="447" y1="599" x2="447" y2="688" stroke="#a30b0d" stroke-width="1" />
<line x1="525.5" y1="599" x2="525.5" y2="688" stroke="#a30b0d" stroke-width="1" />
<line x1="594" y1="599" x2="594" y2="688" stroke="#a30b0d" stroke-width="1" />
<line x1="681.5" y1="599" x2="681.5" y2="688" stroke="#a30b0d" stroke-width="1" />
<line x1="784" y1="599" x2="784" y2="688" stroke="#a30b0d" stroke-width="1" />
<line x1="1052" y1="599" x2="1052" y2="688" stroke="#a30b0d" stroke-width="1" />
<line x1="1127" y1="599" x2="1127" y2="688" stroke="#a30b0d" stroke-width="1" />
<rect x="3.2" y="599" width="1.6" height="89" fill="#c8c8c8"/>
<rect x="8" y="688.4" width="55.5" height="23.2" fill="#04040c" stroke="#2f3039" stroke-width="1.8"/>
<text x="30.55" y="705.8" font-size="15.6" fill="#fff" font-weight="700" text-anchor="start" textLength="10.4" lengthAdjust="spacingAndGlyphs" >m</text>
<rect x="63.5" y="688.4" width="56.5" height="23.2" fill="#04040c" stroke="#2f3039" stroke-width="1.8"/>
<text x="87.95" y="705.8" font-size="15.6" fill="#fff" font-weight="700" text-anchor="start" textLength="7.6" lengthAdjust="spacingAndGlyphs" >o</text>
<rect x="120" y="688.4" width="52" height="23.2" fill="#04040c" stroke="#2f3039" stroke-width="1.8"/>
<text x="144.2" y="705.8" font-size="15.6" fill="#fff" font-weight="700" text-anchor="start" textLength="3.6" lengthAdjust="spacingAndGlyphs" >j</text>
<rect x="172" y="688.4" width="44" height="23.2" fill="#04040c" stroke="#2f3039" stroke-width="1.8"/>
<text x="192.7" y="705.8" font-size="15.6" fill="#fff" font-weight="700" text-anchor="start" textLength="2.6" lengthAdjust="spacingAndGlyphs" >I</text>
<rect x="216" y="688.4" width="91" height="23.2" fill="#04040c" stroke="#2f3039" stroke-width="1.8"/>
<text x="257.7" y="705.8" font-size="15.6" fill="#fff" font-weight="700" text-anchor="start" textLength="7.6" lengthAdjust="spacingAndGlyphs" >o</text>
<rect x="307" y="688.4" width="46" height="23.2" fill="#04040c" stroke="#2f3039" stroke-width="1.8"/>
<text x="322.7" y="705.8" font-size="15.6" fill="#fff" font-weight="700" text-anchor="start" textLength="14.6" lengthAdjust="spacingAndGlyphs" >ny</text>
<rect x="353" y="688.4" width="50.5" height="23.2" fill="#04040c" stroke="#2f3039" stroke-width="1.8"/>
<text x="374.65" y="705.8" font-size="15.6" fill="#fff" font-weight="700" text-anchor="start" textLength="7.2" lengthAdjust="spacingAndGlyphs" >u</text>
<rect x="403.5" y="688.4" width="43.5" height="23.2" fill="#04040c" stroke="#2f3039" stroke-width="1.8"/>
<text x="421.65" y="705.8" font-size="15.6" fill="#fff" font-weight="700" text-anchor="start" textLength="7.2" lengthAdjust="spacingAndGlyphs" >u</text>
<rect x="447" y="688.4" width="41" height="23.2" fill="#04040c" stroke="#2f3039" stroke-width="1.8"/>
<text x="461.7" y="705.8" font-size="15.6" fill="#fff" font-weight="700" text-anchor="start" textLength="11.6" lengthAdjust="spacingAndGlyphs" >ry</text>
<rect x="488" y="688.4" width="37.5" height="23.2" fill="#04040c" stroke="#2f3039" stroke-width="1.8"/>
<text x="502.95" y="705.8" font-size="15.6" fill="#fff" font-weight="700" text-anchor="start" textLength="7.6" lengthAdjust="spacingAndGlyphs" >o</text>
<rect x="525.5" y="688.4" width="33.5" height="23.2" fill="#04040c" stroke="#2f3039" stroke-width="1.8"/>
<text x="538.75" y="705.8" font-size="15.6" fill="#fff" font-weight="700" text-anchor="start" textLength="7" lengthAdjust="spacingAndGlyphs" >k</text>
<rect x="559" y="688.4" width="35" height="23.2" fill="#04040c" stroke="#2f3039" stroke-width="1.8"/>
<text x="572.3" y="705.8" font-size="15.6" fill="#fff" font-weight="700" text-anchor="start" textLength="8.4" lengthAdjust="spacingAndGlyphs" >U</text>
<rect x="594" y="688.4" width="64.5" height="23.2" fill="#04040c" stroke="#2f3039" stroke-width="1.8"/>
<text x="619.55" y="705.8" font-size="15.6" fill="#fff" font-weight="700" text-anchor="start" textLength="13.4" lengthAdjust="spacingAndGlyphs" >sh</text>
<rect x="658.5" y="688.4" width="23.0" height="23.2" fill="#04040c" stroke="#2f3039" stroke-width="1.8"/>
<text x="668.7" y="705.8" font-size="15.6" fill="#fff" font-weight="700" text-anchor="start" textLength="2.6" lengthAdjust="spacingAndGlyphs" >I</text>
<rect x="681.5" y="688.4" width="39.5" height="23.2" fill="#04040c" stroke="#2f3039" stroke-width="1.8"/>
<text x="696.05" y="705.8" font-size="15.6" fill="#fff" font-weight="700" text-anchor="start" textLength="10.4" lengthAdjust="spacingAndGlyphs" >m</text>
<rect x="721" y="688.4" width="63" height="23.2" fill="#04040c" stroke="#2f3039" stroke-width="1.8"/>
<text x="749.0" y="705.8" font-size="15.6" fill="#fff" font-weight="700" text-anchor="start" textLength="7" lengthAdjust="spacingAndGlyphs" >a</text>
<rect x="784" y="688.4" width="105" height="23.2" fill="#04040c" stroke="#2f3039" stroke-width="1.8"/>
<text x="833.4" y="705.8" font-size="15.6" fill="#fff" font-weight="700" text-anchor="start" textLength="6.2" lengthAdjust="spacingAndGlyphs" >s</text>
<rect x="889" y="688.4" width="163" height="23.2" fill="#04040c" stroke="#2f3039" stroke-width="1.8"/>
<text x="966.3" y="705.8" font-size="15.6" fill="#fff" font-weight="700" text-anchor="start" textLength="8.4" lengthAdjust="spacingAndGlyphs" >U</text>
<rect x="1052" y="688.4" width="75" height="23.2" fill="#04040c" stroke="#2f3039" stroke-width="1.8"/>
<text x="1083.7" y="705.8" font-size="15.6" fill="#fff" font-weight="700" text-anchor="start" textLength="11.6" lengthAdjust="spacingAndGlyphs" >sil</text>
</g>
<polygon points="5.7,721.6 15.6,714.9 15.6,728.4" fill="#ec8200" />
<rect x="22.2" y="713.8" width="957.8" height="15.1" fill="#ec8200" rx="5.5"/>
<polygon points="1132,721.6 1122.6,715.2 1122.6,728.1" fill="#ec8200" />
<path d="M1148.7 725.2 L1152.1 728.7" stroke="#1a1a1e" stroke-width="3.6" stroke-linecap="round"/>
<path d="M1148.7 725.2 L1152.1 728.7" stroke="#d4d4d4" stroke-width="1.7" stroke-linecap="round"/>
<circle cx="1144.5" cy="721.0" r="5.7" fill="#17171c" stroke="#1a1a1e" stroke-width="3.4"/>
<circle cx="1144.5" cy="721.0" r="5.7" fill="none" stroke="#ededed" stroke-width="1.5"/>
<path d="M1141.5 721.0 H1147.5" stroke="#e6e6e6" stroke-width="1.9"/>
<rect x="1162.9" y="719.2" width="72.1" height="4.8" fill="#555" rx="1"/>
<rect x="1206.2" y="713.8" width="5.2" height="15.2" fill="#ee8400"/>
<path d="M1256.0 725.2 L1259.3999999999999 728.7" stroke="#1a1a1e" stroke-width="3.6" stroke-linecap="round"/>
<path d="M1256.0 725.2 L1259.3999999999999 728.7" stroke="#d4d4d4" stroke-width="1.7" stroke-linecap="round"/>
<circle cx="1251.8" cy="721.0" r="5.7" fill="#17171c" stroke="#1a1a1e" stroke-width="3.4"/>
<circle cx="1251.8" cy="721.0" r="5.7" fill="none" stroke="#ededed" stroke-width="1.5"/>
<path d="M1248.8 721.0 H1254.8" stroke="#e6e6e6" stroke-width="1.9"/>
<path d="M1251.8 718.0 V724.0" stroke="#e6e6e6" stroke-width="1.9"/>
<path d="M1273.7 656.2 L1277.1 659.7" stroke="#1a1a1e" stroke-width="3.6" stroke-linecap="round"/>
<path d="M1273.7 656.2 L1277.1 659.7" stroke="#d4d4d4" stroke-width="1.7" stroke-linecap="round"/>
<circle cx="1269.5" cy="652.0" r="5.7" fill="#17171c" stroke="#1a1a1e" stroke-width="3.4"/>
<circle cx="1269.5" cy="652.0" r="5.7" fill="none" stroke="#ededed" stroke-width="1.5"/>
<path d="M1266.5 652.0 H1272.5" stroke="#e6e6e6" stroke-width="1.9"/>
<path d="M1269.5 649.0 V655.0" stroke="#e6e6e6" stroke-width="1.9"/>
<path d="M1273.7 682.6 L1277.1 686.1" stroke="#1a1a1e" stroke-width="3.6" stroke-linecap="round"/>
<path d="M1273.7 682.6 L1277.1 686.1" stroke="#d4d4d4" stroke-width="1.7" stroke-linecap="round"/>
<circle cx="1269.5" cy="678.4" r="5.7" fill="#17171c" stroke="#1a1a1e" stroke-width="3.4"/>
<circle cx="1269.5" cy="678.4" r="5.7" fill="none" stroke="#ededed" stroke-width="1.5"/>
<path d="M1266.5 678.4 H1272.5" stroke="#e6e6e6" stroke-width="1.9"/>
<path d="M1262.7 667.7 H1277.6 V672.5 Q1270 668.6 1262.7 672.5 Z" fill="#ec8200"/>
</svg>
</div>
</body></html>
